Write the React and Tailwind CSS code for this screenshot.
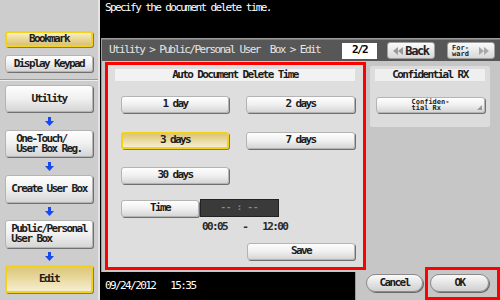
import React from "react";

const F = "font-['DejaVu_Sans_Mono',monospace]";
const T = "text-[11px] tracking-[-1.6px]";
const btn =
  "bg-linear-to-b from-[#fefefe] via-[#f0f0f0] to-[#d6d6d6] border border-[#b4b4b4] rounded-[3px] shadow-[1px_1px_0_#707070]";
const yel =
  "bg-linear-to-b from-[#dcc67a] via-[#ead9a0] to-[#f5eed2] border-2 border-[#f2d21a] rounded-[3px] shadow-[1px_1px_0_#8a7a40]";
const yel2 =
  "bg-linear-to-b from-[#f7efc8] via-[#ead896] to-[#d9c278] border-2 border-[#f2d21a] rounded-[3px] shadow-[1px_1px_0_#8a7a40]";

function Arrow() {
  return (
    <div className="flex items-center justify-center h-full">
      <svg width="9" height="9" viewBox="0 0 9 9">
        <path d="M3 0h3v4h3l-4.5 5L0 4h3z" fill="#1848f0" />
      </svg>
    </div>
  );
}

function SideBtn({ children, cls, h, left }) {
  return (
    <div
      className={`${cls} ${h} w-[88px] ml-[5px] flex items-center justify-center ${T} leading-[10px] font-bold text-[#1c1c1c]`}
    >
      {left ? <span className="text-left whitespace-pre">{children}</span> : children}
    </div>
  );
}

function DblTri({ dir }) {
  return (
    <svg width="11" height="8" viewBox="0 0 11 8">
      {dir === "l" ? (
        <path d="M5 0v8L0 4zM10 0v8L5 4z" fill="#9a9a9a" />
      ) : (
        <path d="M0 0v8l5-4zM5 0v8l5-4z" fill="#a8a8a8" />
      )}
    </svg>
  );
}

function PanelBtn({ children, w, cls = btn }) {
  return (
    <div
      className={`${cls} ${w} h-[17px] flex items-center justify-center ${T} font-bold text-[#1c1c1c]`}
    >
      {children}
    </div>
  );
}

export default function App() {
  return (
    <div className={`${F} relative w-[500px] h-[300px] flex bg-black overflow-hidden`}>
      {/* Sidebar */}
      <div className="w-[100px] h-full bg-[#cdcdcd] border-r-2 border-[#e4e4e4] flex flex-col">
        <div className="h-[31px]" />
        <SideBtn cls={yel2} h="h-[16px]">Bookmark</SideBtn>
        <div className="h-[8px]" />
        <SideBtn cls={btn} h="h-[17px]">Display Keypad</SideBtn>
        <div className="h-[7px]" />
        <div className="h-[2px] border-t border-[#9a9a9a] bg-[#ececec] w-full" />
        <div className="h-[4px]" />
        <SideBtn cls={btn} h="h-[27px]">Utility</SideBtn>
        <div className="h-[18px]"><Arrow /></div>
        <SideBtn cls={btn} h="h-[27px]" left>{"One-Touch/\nUser Box Reg."}</SideBtn>
        <div className="h-[18px]"><Arrow /></div>
        <SideBtn cls={btn} h="h-[28px]">Create User Box</SideBtn>
        <div className="h-[17px]"><Arrow /></div>
        <SideBtn cls={btn} h="h-[28px]" left>{"Public/Personal\nUser Box"}</SideBtn>
        <div className="h-[17px]"><Arrow /></div>
        <SideBtn cls={yel} h="h-[28px]">Edit</SideBtn>
      </div>

      {/* Right column */}
      <div className="w-[400px] h-full flex flex-col">
        <div className={`h-[38px] pl-[5px] pt-[2px] text-white ${T} leading-[12px]`}>
          Specify the document delete time.
        </div>

        {/* Frame */}
        <div className="h-[234px] ml-[1px] bg-[#c6c6c6] border-l border-t border-[#9c9c9c] flex flex-col">
          {/* title bar */}
          <div className="h-[22px] bg-[#575757] border-t border-[#7a7a7a] flex items-center pl-[7px] pr-[5px]">
            <span className={`text-[#e6e6e6] ${T} whitespace-pre`}>
              {"Utility > Public/Personal User  Box > Edit"}
            </span>
            <div className={`ml-auto w-[35px] h-[16px] bg-white flex items-center justify-center ${T} font-bold text-black`}>
              2/2
            </div>
            <div className="ml-[10px] w-[48px] h-[17px] bg-linear-to-b from-[#fafafa] to-[#d8d8d8] border border-[#a0a0a0] rounded-[3px] flex items-center justify-center gap-[1px]">
              <DblTri dir="l" />
              <span className="text-[12px] font-bold tracking-[-1.4px] text-[#222]">Back</span>
            </div>
            <div className="ml-[12px] w-[48px] h-[17px] bg-linear-to-b from-[#fafafa] to-[#d8d8d8] border border-[#a0a0a0] rounded-[3px] flex items-center justify-between px-[4px]">
              <span className="text-[7px] leading-[6px] font-bold text-[#222] whitespace-pre">{"For-\nward"}</span>
              <DblTri dir="r" />
            </div>
          </div>

          {/* body */}
          <div className="flex pl-[3px] pt-[1px]">
            {/* red box */}
            <div className="w-[261px] h-[208px] border-[3px] border-[#ff0000] bg-[#dedede] flex flex-col">
              <div className={`ml-[7px] mt-[4px] w-[240px] h-[12px] bg-[#f2f2f2] flex items-center justify-center ${T} font-bold text-[#1c1c1c]`}>
                Auto Document Delete Time
              </div>
              <div className="flex ml-[13px] mt-[15px] gap-[17px]">
                <PanelBtn w="w-[108px]">1 day</PanelBtn>
                <PanelBtn w="w-[109px]">2 days</PanelBtn>
              </div>
              <div className="flex ml-[13px] mt-[19px] gap-[17px]">
                <PanelBtn w="w-[108px]" cls={yel}>3 days</PanelBtn>
                <PanelBtn w="w-[109px]">7 days</PanelBtn>
              </div>
              <div className="flex ml-[13px] mt-[18px]">
                <PanelBtn w="w-[108px]">30 days</PanelBtn>
              </div>
              <div className="flex ml-[13px] mt-[16px]">
                <PanelBtn w="w-[78px]">Time</PanelBtn>
                <div className="ml-[1px] w-[79px] h-[18px] -mt-[1px] bg-[#3a3a3a] border border-[#222] flex items-center justify-center text-[9px] text-[#8c8c8c] font-bold whitespace-pre">
                  {"-- : --"}
                </div>
              </div>
              <div className={`flex ml-[94px] mt-[5px] ${T} font-bold text-[#2a2a2a] whitespace-pre leading-[10px]`}>
                {"00:05   -   12:00"}
              </div>
              <div className="flex ml-[139px] mt-[11px]">
                <PanelBtn w="w-[108px]">Save</PanelBtn>
              </div>
            </div>

            {/* right panel */}
            <div className="ml-[4px] mt-[4px] w-[120px] h-[61px] bg-[#dcdcdc] rounded-[2px] flex flex-col">
              <div className={`ml-[5px] mt-[3px] w-[110px] h-[12px] bg-[#efefef] flex items-center justify-center ${T} font-bold text-[#1c1c1c]`}>
                Confidential RX
              </div>
              <div className={`${btn} relative ml-[6px] mt-[16px] w-[109px] h-[16px] flex items-center justify-center`}>
                <span className="text-[7px] leading-[6px] font-bold text-[#222] text-left whitespace-pre">{"Confiden-\ntial Rx"}</span>
                <svg className="absolute right-[2px] bottom-[2px]" width="5" height="5" viewBox="0 0 5 5">
                  <path d="M5 0v5H0z" fill="#9a9a9a" />
                </svg>
              </div>
            </div>
          </div>
        </div>

        {/* bottom row */}
        <div className="flex-1 flex">
          <div className={`w-[255px] h-full flex items-center pl-[5px] text-white ${T} whitespace-pre`}>
            {"09/24/2012   15:35"}
          </div>
          <div className="flex-1 h-full bg-[#c6c6c6] border-l border-[#9c9c9c] flex items-start pt-[2px] pl-[10px] gap-[7px]">
            <div className={`w-[57px] h-[18px] rounded-full bg-linear-to-b from-[#fafafa] to-[#d0d0d0] border border-[#8a8a8a] shadow-[1px_1px_0_#6a6a6a] flex items-center justify-center ${T} font-bold text-[#1c1c1c]`}>
              Cancel
            </div>
            <div className={`w-[59px] h-[18px] rounded-full bg-linear-to-b from-[#fafafa] to-[#d0d0d0] border border-[#8a8a8a] shadow-[1px_1px_0_#6a6a6a] flex items-center justify-center ${T} font-bold text-[#1c1c1c]`}>
              OK
            </div>
          </div>
        </div>
      </div>

      {/* OK highlight annotation */}
      <div className="absolute left-[425px] top-[267px] w-[75px] h-[33px] border-[3px] border-[#ff0000]" />
    </div>
  );
}
